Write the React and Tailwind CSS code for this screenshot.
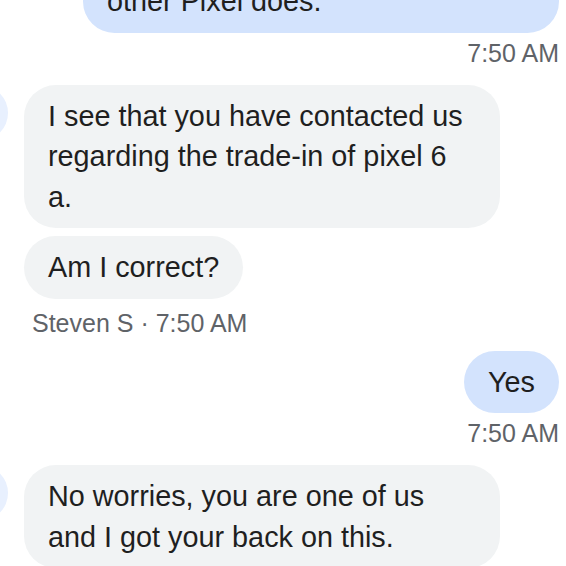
import React from "react";

function Avatar() {
  return <div className="ml-[-48px] h-14 w-14 shrink-0 rounded-full bg-[#e8f0fe]" />;
}

function Received({ children }) {
  return (
    <div className="max-w-[476px] rounded-[32px] bg-[#f1f3f4] px-6 py-[11px] text-[28.8px] leading-[40.5px] text-[#1f1f1f]">
      {children}
    </div>
  );
}

function Sent({ children, className = "" }) {
  return (
    <div
      className={
        "max-w-[476px] rounded-[32px] bg-[#d3e3fd] px-6 py-[11px] text-[28.8px] leading-[40.5px] text-[#1f1f1f] " +
        className
      }
    >
      {children}
    </div>
  );
}

function Time({ children, className = "" }) {
  return (
    <div className={"text-[25px] leading-[32px] text-[#5f6368] " + className}>{children}</div>
  );
}

export default function App() {
  return (
    <div
      className="h-[566px] w-[566px] overflow-hidden bg-white"
      style={{ fontFamily: '"Liberation Sans", Arial, sans-serif' }}
    >
      <div className="mt-[-30px] flex flex-col pr-[7px]">
        <div className="flex flex-col items-end">
          <Sent className="w-[476px]">other Pixel does.</Sent>
          <Time className="mt-1">7:50 AM</Time>
        </div>

        <div className="mt-[16px] flex items-start gap-4">
          <Avatar />
          <div className="flex flex-col items-start gap-2">
            <Received>
              I see that you have contacted us regarding the trade-in of pixel 6 a.
            </Received>
            <Received>Am I correct?</Received>
            <Time className="pl-2">Steven S · 7:50 AM</Time>
          </div>
        </div>

        <div className="mt-3 flex flex-col items-end">
          <Sent>Yes</Sent>
          <Time className="mt-1">7:50 AM</Time>
        </div>

        <div className="mt-4 flex items-start gap-4">
          <Avatar />
          <div className="flex flex-col items-start gap-2">
            <Received>No worries, you are one of us and I got your back on this.</Received>
          </div>
        </div>
      </div>
    </div>
  );
}
